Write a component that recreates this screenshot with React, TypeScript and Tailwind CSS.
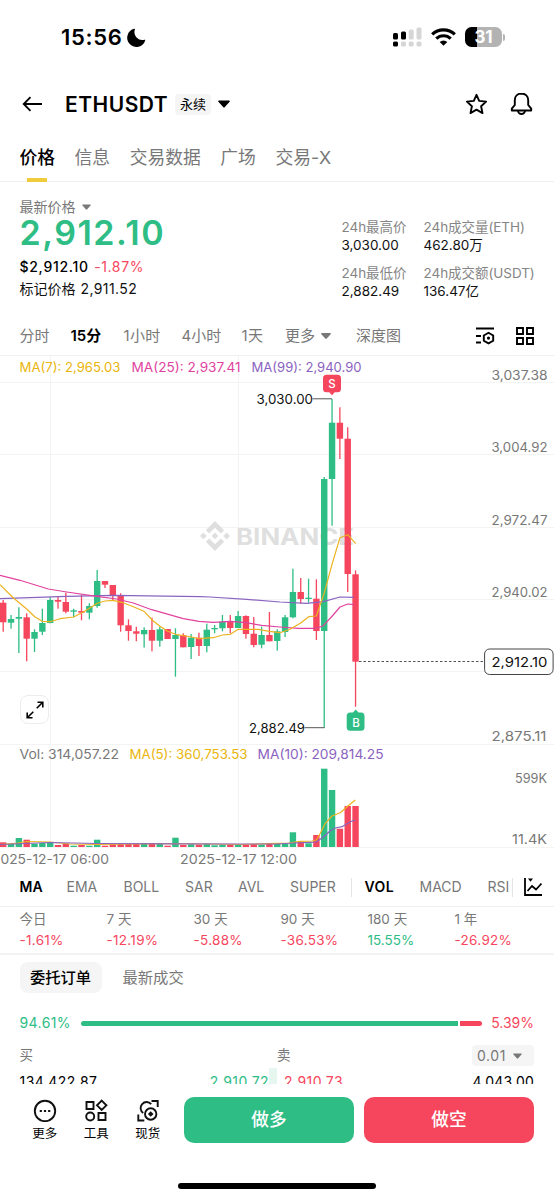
import React from 'react';
import { SiBinance } from 'react-icons/si';

type Candle = [up: number, top: number, bottom: number, high: number, low: number, vol: number];

// [up, body top, body bottom, wick top, wick bottom, volume top]
const CANDLES: Candle[] = [
  [0, 602.7, 622.3, 600, 631.7, 842.3],
  [1, 619, 622.7, 615, 628.7, 844],
  [1, 617, 618.7, 607.3, 653, 838],
  [0, 617.3, 638.7, 613.3, 661.3, 839.7],
  [1, 632, 638.7, 629.3, 652, 843.7],
  [1, 623, 631.7, 608.7, 635, 843],
  [1, 600, 623, 597.3, 623.3, 842],
  [0, 600, 601.7, 596.7, 608.7, 845],
  [0, 602, 611.7, 592.7, 613.3, 843.7],
  [1, 610.3, 611.7, 608.7, 617.3, 845.7],
  [0, 611, 612.7, 595, 620.3, 845],
  [1, 606, 612.7, 603.3, 619.3, 845.7],
  [1, 581, 606, 570, 607.7, 839.7],
  [0, 581, 584.7, 581, 588, 845.7],
  [0, 585, 595.7, 585, 600, 844.3],
  [0, 595.7, 625.3, 593.3, 631.7, 843.7],
  [0, 625.3, 631, 619.3, 640.7, 843.7],
  [0, 631.3, 633.7, 626.7, 641.3, 843.7],
  [1, 630, 634.3, 627.3, 647.7, 843.3],
  [0, 630, 640.7, 617.7, 651.3, 843],
  [1, 629.3, 640.7, 626.7, 646.7, 843.7],
  [0, 629, 639, 629, 639, 845.7],
  [1, 635, 639, 628.3, 676.7, 837.7],
  [0, 635.3, 647.3, 633.3, 647.3, 845],
  [1, 637.7, 647, 634, 659, 844.3],
  [0, 637.7, 646, 632.7, 656, 844.7],
  [1, 629.7, 646, 623.7, 652.3, 843.7],
  [1, 628, 629.3, 625, 633.3, 845.3],
  [1, 621.7, 628.3, 615, 631.3, 845],
  [0, 621.3, 628, 615, 633.3, 845],
  [1, 616, 628, 611, 628, 845],
  [0, 616, 634, 615.3, 638.7, 844.7],
  [0, 633.7, 645, 617, 647.3, 844],
  [1, 635, 644.7, 626.7, 648.3, 844.7],
  [0, 635, 641.3, 612, 641.3, 843.7],
  [1, 631.3, 641, 629.3, 650.7, 844],
  [1, 617.3, 632, 615, 637, 844],
  [1, 592, 617.3, 568.7, 618.3, 832.3],
  [0, 592, 599, 578, 603.7, 841.7],
  [1, 597.7, 599, 578.7, 602.7, 843.3],
  [0, 598.7, 631, 579.3, 640, 835],
  [1, 479, 631, 477, 727.7, 768.7],
  [1, 422.7, 479, 399, 525.7, 790],
  [0, 422.7, 438.7, 407.3, 459, 828.7],
  [0, 438.7, 574, 427.3, 592, 806],
  [0, 574.3, 661.7, 570.3, 706.7, 806],
];

const MA7 =
  '0,584.7 13.7,598.3 27,609.3 34.7,616.7 42.3,621.3 50,621.7 60,618.7 73.7,617 85,611 97.3,603.3 105,601 113,600.3 121.7,602.3 133.3,606.7 144,611.3 153.3,621 160,626.3 167.7,631.3 176.7,634.7 191.7,637 199,638.7 213.3,637.7 222.3,635 230.3,634.3 238.3,629.3 258.3,629.3 269.3,631.3 280,632.7 290,629.3 300.7,623 308.7,616.7 316.3,616 324.3,592.7 332.3,563.3 340,537.7 347.7,534.7 355.7,543.7';
const MA25 =
  '0,575.3 20,580.3 48.3,589 66.7,592 96.7,596.3 116.7,599 133.3,603 151.7,609.7 183.3,618.7 199,621.3 213.3,622.3 230.3,621.3 246,622.7 261.7,625.3 280,627 298.3,628.3 316.3,628.3 323.3,625.7 332.3,616 340,607 347.7,604 354,604.7';
const MA99 =
  '0,598.7 30,597.7 66.7,596.3 113.3,595.3 200,596.7 210,597 246.7,599.3 280,602 306.7,603.3 323.3,601.7 340,597 354,597.3';
const VOL_MA5 =
  '0,844.5 18,843 27,841.5 50,842 70,844 97,844.5 175,843.5 240,844.5 277,843.3 289,843 300,841.3 312,841 316.3,840 320.3,833.3 325.3,823.3 332,816 340.3,812.7 347,806.7 355.3,800';
const VOL_MA10 =
  '0,844.5 50,842.5 97,843.5 175,843.8 240,844 277,844 293.7,843 310.3,842.3 316.3,842 323.7,836.7 330.3,830.7 335.3,828 342,826.7 350.3,821.7 355.3,820';

const GREEN = '#2ebd85';
const RED = '#f6465d';

interface LabelProps {
  x: number;
  y: number;
  w: number;
  fill?: string;
  size?: number;
  weight?: number;
  children: string;
}

const Label: React.FC<LabelProps> = ({ x, y, w, fill = '#787878', size = 13, weight = 400, children }) => (
  <text x={x} y={y} textLength={w} lengthAdjust="spacingAndGlyphs" fill={fill} fontSize={size} fontWeight={weight}>
    {children}
  </text>
);

const Caret: React.FC<{ className: string }> = ({ className }) => (
  <svg className={className} viewBox="0 0 12 7" fill="currentColor">
    <path d="M1 0h10c.8 0 1.1.7.6 1.3L6.9 6.5a1.2 1.2 0 0 1-1.8 0L.4 1.3C-.1.7.2 0 1 0z" />
  </svg>
);

const StatusBar = () => (
  <div className="flex h-[76px] shrink-0 items-center pb-[2px] pl-[61px] pr-[48px]">
    <span className="text-[22px] font-semibold leading-none tracking-[0.7px]">15:56</span>
    <svg className="ml-[4px] h-[19px] w-[19px]" viewBox="0 0 19 19">
      <path d="M7.2.8a9.2 9.2 0 1 0 11 11.6.5.5 0 0 0-.7-.6A8 8 0 0 1 7.9 1.4.5.5 0 0 0 7.2.8z" fill="#000" />
    </svg>
    <svg className="ml-auto h-[20px] w-[30px]" viewBox="0 0 30 20">
      <rect x="1" y="6" width="5" height="6.500" rx="1.5" />
      <rect x="9" y="4.500" width="5" height="8" rx="1.500" />
      <rect x="16.700" y="2.500" width="5" height="10" rx="1.500" fill="#d6d6d6" />
      <rect x="24.500" y="0.500" width="5" height="12" rx="1.500" fill="#d6d6d6" />
      <rect x="1" y="14.500" width="5" height="5" rx="1.500" />
      <rect x="9" y="14.500" width="5" height="5" rx="1.500" fill="#d6d6d6" />
      <rect x="16.700" y="14.500" width="5" height="5" rx="1.500" fill="#d6d6d6" />
      <rect x="24.500" y="14.500" width="5" height="5" rx="1.500" fill="#d6d6d6" />
    </svg>
    <svg className="ml-[9px] h-[18px] w-[25px]" viewBox="0 0 25 18" fill="none" stroke="#000" strokeWidth="3.200">
      <path d="M1.200 6.400a16.200 16.200 0 0 1 22.600 0" />
      <path d="M5.300 10.700a10.300 10.300 0 0 1 14.400 0" />
      <path d="M12.500 17.700 8.700 14a5.400 5.400 0 0 1 7.600 0z" fill="#000" stroke="none" />
    </svg>
    <div className="ml-[9px] flex items-center">
      <div className="flex h-[20px] w-[37px] items-center justify-center rounded-[6.5px] bg-[linear-gradient(to_right,#000_0_12px,#b3b3b3_12px)]">
        <span className="text-[17px] font-bold leading-none tracking-[-0.2px] text-white">31</span>
      </div>
      <div className="ml-px mr-px h-[7px] w-[2px] rounded-r-full bg-[#b3b3b3]" />
    </div>
  </div>
);

const Header = () => (
  <div className="flex h-[56px] shrink-0 items-center pl-[22px] pr-[21px]">
    <svg className="h-[16px] w-[21px]" viewBox="0 0 21 16" fill="none" stroke="#000" strokeWidth="1.8">
      <path d="M20 8H2M8.500 1.200 1.700 8l6.800 6.800" />
    </svg>
    <h1 className="ml-[22px] w-[105px] whitespace-nowrap text-[21px] font-semibold leading-none tracking-[0.5px]">ETHUSDT</h1>
    <span className="ml-[5px] flex h-[21px] w-[36px] items-center justify-center rounded bg-[#f5f5f5] text-[13px] leading-none">永续</span>
    <Caret className="ml-[7px] h-[8px] w-[12px]" />
    <svg className="ml-auto h-[22px] w-[23px]" viewBox="0 0 23 22" fill="none" stroke="#000" strokeWidth="1.900" strokeLinejoin="round">
      <path d="m11.500 1.800 2.700 6.100 6.900.7-5 4.700 1.400 6.800-6-3.400-6 3.400 1.400-6.800-5-4.700 6.900-.7z" />
    </svg>
    <svg className="ml-[22px] h-[24px] w-[23px]" viewBox="0 0 23 24" fill="none" stroke="#000" strokeWidth="1.900" strokeLinejoin="round">
      <path d="M11.500 1.500c-4 0-6.700 2.800-6.700 6.500v5L1.800 16.700v1.800h19.400v-1.800L18.200 13V8c0-3.700-2.700-6.500-6.700-6.500z" />
      <path d="M8 18.800a3.500 3.200 0 0 0 7 0" />
    </svg>
  </div>
);

const Tabs = () => (
  <nav className="flex h-[50px] shrink-0 items-start gap-[19.500px] border-b border-[#f0f0f0] pl-[19.500px] pt-[12.500px] text-[17.800px] leading-[26px] text-[#787878]">
    <div className="flex flex-col items-center">
      <span className="font-medium text-black">价格</span>
      <span className="mt-[7.500px] h-[3.500px] w-[20px] bg-[#f0cb3c]" />
    </div>
    <span>信息</span>
    <span>交易数据</span>
    <span>广场</span>
    <span>交易-X</span>
  </nav>
);

const Stat: React.FC<{ label: string; value: string }> = ({ label, value }) => (
  <div className="whitespace-nowrap">
    <p className="text-[13.500px] leading-[18px] tracking-[-0.05px] text-[#858585]">{label}</p>
    <p className="text-[13.500px] leading-[18px] text-[#111]">{value}</p>
  </div>
);

const PriceSummary = () => (
  <section className="flex h-[135px] shrink-0 justify-between pl-[19.500px] pr-[18.500px]">
    <div className="pt-[16px]">
      <p className="flex items-center text-[14px] leading-[18px] text-[#787878]">
        最新价格
        <Caret className="ml-[6px] h-[6px] w-[9px]" />
      </p>
      <p className="mt-[2px] text-[34px] font-semibold leading-[30px] tracking-[1.500px] text-[#2ebd85]">2,912.10</p>
      <p className="mt-[9px] flex gap-[5.500px] text-[14px] leading-[20px]">
        <span className="font-medium tracking-[0.700px]">$2,912.10</span>
        <span className="tracking-[0.600px] text-[#f6465d]">-1.87%</span>
      </p>
      <p className="mt-[2px] flex gap-[5px] text-[14px] leading-[20px] text-[#111]">
        <span>标记价格</span>
        <span className="tracking-[0.400px]">2,911.52</span>
      </p>
    </div>
    <div className="grid grid-cols-[82px_112px] content-start gap-y-[10px] pt-[36px]">
      <Stat label="24h最高价" value="3,030.00" />
      <Stat label="24h成交量(ETH)" value="462.80万" />
      <Stat label="24h最低价" value="2,882.49" />
      <Stat label="24h成交额(USDT)" value="136.47亿" />
    </div>
  </section>
);

const IntervalBar = () => (
  <div className="flex h-[39px] shrink-0 items-center border-b border-[#f0f0f0] pb-[1px] pl-[19.500px] pr-[20.500px] text-[15px] leading-none text-[#787878]">
    <span className="w-[51px]">分时</span>
    <span className="w-[53px] font-semibold text-black">15分</span>
    <span className="w-[58px] tracking-[0.300px]">1小时</span>
    <span className="w-[60px]">4小时</span>
    <span className="w-[43.500px] tracking-[0.300px]">1天</span>
    <span className="flex w-[71px] items-center">
      更多
      <Caret className="ml-[6px] h-[6px] w-[10px]" />
    </span>
    <span>深度图</span>
    <svg className="ml-auto h-[18px] w-[20px]" viewBox="0 0 20 18" fill="none" stroke="#000" strokeWidth="1.900">
      <path d="M1 1.500h18M1 9h5M1 15.500h5" />
      <path d="m13.500 5.800 4.700 2.700v5.200l-4.700 2.700-4.700-2.700V8.500z" />
      <circle cx="13.500" cy="11.100" r="1.600" fill="#000" stroke="none" />
    </svg>
    <svg className="ml-[21px] h-[18px] w-[18px]" viewBox="0 0 18 18" fill="none" stroke="#000" strokeWidth="1.900">
      <path d="M1 1h6v6H1zM11 1h6v6h-6zM1 11h6v6H1zM11 11h6v6h-6z" />
    </svg>
  </div>
);

const Chart = () => (
  <div className="relative h-[512px] shrink-0">
    <svg className="block h-[512px] w-[554px]" viewBox="0 356 554 512">
      <path
        d="M0 382.500H554M0 454.500H554M0 527.500H554M0 599.500H554M0 671.500H554M0 744.500H554M0 847.500H554M50.500 356V847M238.500 356V847"
        stroke="#f3f3f3"
      />

      {/* watermark */}
      <SiBinance x={200} y={521} size={30} color="#dfdfdf" />
      <Label x={236} y={544.500} w={118} size={23} weight={700} fill="#dfdfdf">BINANCE</Label>

      <Label x={19.500} y={372} w={101} fill="#e9b50b">MA(7): 2,965.03</Label>
      <Label x={131.500} y={372} w={109} fill="#e0439f">MA(25): 2,937.41</Label>
      <Label x={251.500} y={372} w={110} fill="#8a63c0">MA(99): 2,940.90</Label>

      {CANDLES.map(([up, top, bottom, high, low, vol], i) => {
        const x = 3.2 + i * 7.83;
        const color = up ? GREEN : RED;
        return (
          <g key={i} fill={color}>
            <rect x={x - 0.65} y={high} width={1.3} height={low - high} />
            <rect x={x - 3.2} y={top} width={6.4} height={bottom - top} />
            <rect x={x - 3.2} y={vol} width={6.4} height={847 - vol} />
          </g>
        );
      })}

      <g fill="none" strokeWidth="1.200" strokeLinejoin="round">
        <polyline points={MA99} stroke="#8a63c0" />
        <polyline points={MA25} stroke="#e0439f" />
        <polyline points={MA7} stroke="#ecb320" />
        <polyline points={VOL_MA5} stroke="#ecb320" />
        <polyline points={VOL_MA10} stroke="#8a63c0" />
      </g>

      {/* high and low markers */}
      <path d="M312.500 398.800H332M304.500 727.700H324.500" stroke="#555" />
      <Label x={256.500} y={403.500} w={56.500} fill="#111">3,030.00</Label>
      <Label x={249} y={733} w={56} fill="#111">2,882.49</Label>
      <path d="M326.500 374.800h11a3.500 3.500 0 0 1 3.500 3.500v10.500a3.500 3.500 0 0 1-3.500 3.500h-2.800l-2.700 2.900-2.700-2.900h-2.800a3.500 3.500 0 0 1-3.500-3.500v-10.500a3.500 3.500 0 0 1 3.500-3.500z" fill={RED} />
      <text x="332" y="388" textAnchor="middle" fill="#fff" fontSize="11.500" fontWeight="500">S</text>
      <path d="m355.700 709.500 2.800 3h2.500a3.500 3.500 0 0 1 3.500 3.500v11.300a3.500 3.500 0 0 1-3.500 3.500h-10.800a3.500 3.500 0 0 1-3.500-3.500V716a3.500 3.500 0 0 1 3.500-3.500h2.700z" fill={GREEN} />
      <text x="356" y="726.500" textAnchor="middle" fill="#fff" fontSize="11.500" fontWeight="500">B</text>

      {/* price axis */}
      <Label x={491.500} y={380} w={56}>3,037.38</Label>
      <Label x={491.500} y={452} w={56}>3,004.92</Label>
      <Label x={491.500} y={524.500} w={56}>2,972.47</Label>
      <Label x={491.500} y={597} w={56}>2,940.02</Label>
      <Label x={491.500} y={740.500} w={55}>2,875.11</Label>
      <path d="M359 661.500H484" stroke="#555" strokeDasharray="2.500 2" />
      <rect x="484.600" y="649" width="68.500" height="25.500" rx="5" fill="#fff" stroke="#444" />
      <Label x={491.500} y={667} w={56} fill="#111">2,912.10</Label>

      {/* volume pane */}
      <Label x={19.500} y={758.500} w={99.500}>Vol: 314,057.22</Label>
      <Label x={129.500} y={758.500} w={118} fill="#e9b50b">MA(5): 360,753.53</Label>
      <Label x={257.500} y={758.500} w={126} fill="#8a63c0">MA(10): 209,814.25</Label>
      <Label x={515} y={783} w={32}>599K</Label>
      <Label x={512} y={843.500} w={35}>11.4K</Label>
      <Label x={-8} y={864} w={117}>2025-12-17 06:00</Label>
      <Label x={180} y={864} w={117}>2025-12-17 12:00</Label>
    </svg>

    <button className="absolute left-[20px] top-[339px] flex h-[29px] w-[29px] items-center justify-center rounded-[8px] border border-[#ececec] bg-white">
      <svg className="h-[18px] w-[18px] shrink-0" viewBox="0 0 18 18" fill="none" stroke="#000" strokeWidth="1.600">
        <path d="M10.700 7.300 16.500 1.500M11.500 1.200h5.300v5.300M7.300 10.700 1.500 16.500M1.200 11.500v5.300h5.300" />
      </svg>
    </button>
  </div>
);

const IndicatorBar = () => (
  <div className="flex h-[39px] shrink-0 items-center border-b border-[#f0f0f0] pl-[19.500px] pr-[12px] text-[14px] leading-none text-[#787878]">
    <span className="w-[47px] font-semibold text-black">MA</span>
    <span className="w-[57px]">EMA</span>
    <span className="w-[61.500px]">BOLL</span>
    <span className="w-[53px]">SAR</span>
    <span className="w-[52px]">AVL</span>
    <span className="w-[60.500px]">SUPER</span>
    <span className="mr-[13px] h-[19px] w-px bg-[#e4e4e4]" />
    <span className="w-[55px] font-semibold tracking-[0.400px] text-black">VOL</span>
    <span className="w-[68px]">MACD</span>
    <span className="w-[24.500px]">RSI</span>
    <span className="h-[19px] w-px bg-[#e4e4e4]" />
    <svg className="ml-auto h-[18px] w-[18px]" viewBox="0 0 18 18" fill="none" stroke="#000" strokeWidth="1.800">
      <path d="M1 0v17h17M3.500 13l4.500-5 4 3.500 5.500-6" />
      <path d="M4 .5h5L6.500 3.700z" fill="#000" stroke="none" />
    </svg>
  </div>
);

const PERIODS = [
  { label: '今日', value: '-1.61%' },
  { label: '7 天', value: '-12.19%' },
  { label: '30 天', value: '-5.88%' },
  { label: '90 天', value: '-36.53%' },
  { label: '180 天', value: '15.55%' },
  { label: '1 年', value: '-26.92%' },
];

const PeriodStats = () => (
  <div className="grid h-[48px] shrink-0 grid-cols-[repeat(6,87px)] border-b-2 border-[#f3f3f3] pl-[19.500px] pt-[2px] text-[13.500px] leading-[21px]">
    {PERIODS.map((p) => (
      <div key={p.label}>
        <p className="text-[#787878]">{p.label}</p>
        <p className={p.value.startsWith('-') ? 'tracking-[0.300px] text-[#f6465d]' : 'text-[#2ebd85]'}>{p.value}</p>
      </div>
    ))}
  </div>
);

const OrderBook = () => (
  <section className="flex h-[129px] shrink-0 flex-col overflow-hidden pl-[19.500px] pr-[20px] pt-[7px]">
    <div className="flex h-[31px] shrink-0 items-center text-[15.300px] leading-none">
      <span className="flex h-[31px] w-[82px] items-center justify-center rounded-[8px] bg-[#f5f5f5] font-medium">委托订单</span>
      <span className="ml-[21px] text-[#787878]">最新成交</span>
    </div>
    <div className="mt-[20px] flex h-[20px] shrink-0 items-center text-[14px] leading-none">
      <span className="w-[61.500px] tracking-[0.400px] text-[#2ebd85]">94.61%</span>
      <span className="h-[5px] w-[377px] rounded-l-full bg-[#2ebd85]" />
      <span className="ml-[2px] h-[5px] w-[22px] rounded-r-full bg-[#f6465d]" />
      <span className="ml-auto text-[#f6465d]">5.39%</span>
    </div>
    <div className="mt-[12px] flex h-[21px] shrink-0 items-center text-[13.500px] leading-none text-[#787878]">
      <span className="w-[257.500px]">买</span>
      <span>卖</span>
      <span className="ml-auto flex h-[21px] w-[62px] items-center rounded bg-[#f5f5f5] pl-[5px] text-[14px] tracking-[0.600px]">
        0.01
        <Caret className="ml-[7px] h-[6px] w-[9px]" />
      </span>
    </div>
    <div className="mt-[2px] flex h-[28px] shrink-0 text-[14px] leading-[28px] tracking-[0.450px]">
      <div className="flex w-[257.500px] justify-between">
        <span>134,422.87</span>
        <span className="bg-[linear-gradient(to_right,transparent_59px,#e6f7f0_59px)] pr-[8px] text-[#2ebd85]">2,910.72</span>
      </div>
      <div className="flex flex-1 justify-between pl-[7px]">
        <span className="text-[#f6465d]">2,910.73</span>
        <span className="tracking-[0.200px]">4,043.00</span>
      </div>
    </div>
  </section>
);

const ActionBar = () => (
  <footer className="flex flex-1 flex-col bg-white">
    <div className="flex h-[72px] items-center pl-[19px] pr-[20px]">
      <div className="grid w-[165px] grid-cols-[51.500px_51.500px_51.500px] justify-items-center pt-[1px] text-[12.500px] leading-[18px]">
        <div className="flex flex-col items-center">
          <svg className="mb-[3px] h-[24px] w-[24px]" viewBox="0 0 24 24" fill="none" stroke="#111" strokeWidth="1.900">
            <circle cx="12" cy="13" r="10.200" />
            <path d="M6.700 13h2.200M10.900 13h2.200M15.100 13h2.200" strokeWidth="2.200" />
          </svg>
          <span>更多</span>
        </div>
        <div className="flex flex-col items-center">
          <svg className="mb-[3px] h-[24px] w-[24px]" viewBox="0 0 24 24" fill="none" stroke="#111" strokeWidth="1.900">
            <path d="M2.500 4h7v7h-7zM14.500 15h7v7h-7zM17.700 2.600l4.700 4.700-4.700 4.700L13 7.300z" />
            <circle cx="6.200" cy="18.500" r="4" />
          </svg>
          <span>工具</span>
        </div>
        <div className="flex flex-col items-center">
          <svg className="mb-[3px] h-[24px] w-[24px]" viewBox="0 0 24 24" fill="none" stroke="#111" strokeWidth="1.900">
            <path d="M15.500 3h6.200v6M2.300 16.500v6h6" />
            <path d="M7.200 15A6 6 0 1 1 15.200 6.200" />
            <circle cx="14.700" cy="16" r="5.700" />
            <path d="m14.700 13.200 2.800 2.800-2.800 2.800-2.800-2.800z" fill="#111" stroke="none" />
          </svg>
          <span>现货</span>
        </div>
      </div>
      <button className="h-[46px] w-[170px] rounded-[10px] bg-[#2ebd85] text-[17.700px] font-medium text-white">做多</button>
      <button className="ml-[10px] h-[46px] w-[170px] rounded-[10px] bg-[#f6465d] text-[17.700px] font-medium text-white">做空</button>
    </div>
    <div className="mx-auto mt-[27px] h-[6px] w-[198px] rounded-full bg-black" />
  </footer>
);

export default function App() {
  return (
    <div className="flex h-[1200px] w-[554px] flex-col overflow-hidden bg-white font-[Inter,'Noto_Sans_CJK_SC',sans-serif] text-black">
      <StatusBar />
      <Header />
      <Tabs />
      <PriceSummary />
      <IntervalBar />
      <Chart />
      <IndicatorBar />
      <PeriodStats />
      <OrderBook />
      <ActionBar />
    </div>
  );
}
